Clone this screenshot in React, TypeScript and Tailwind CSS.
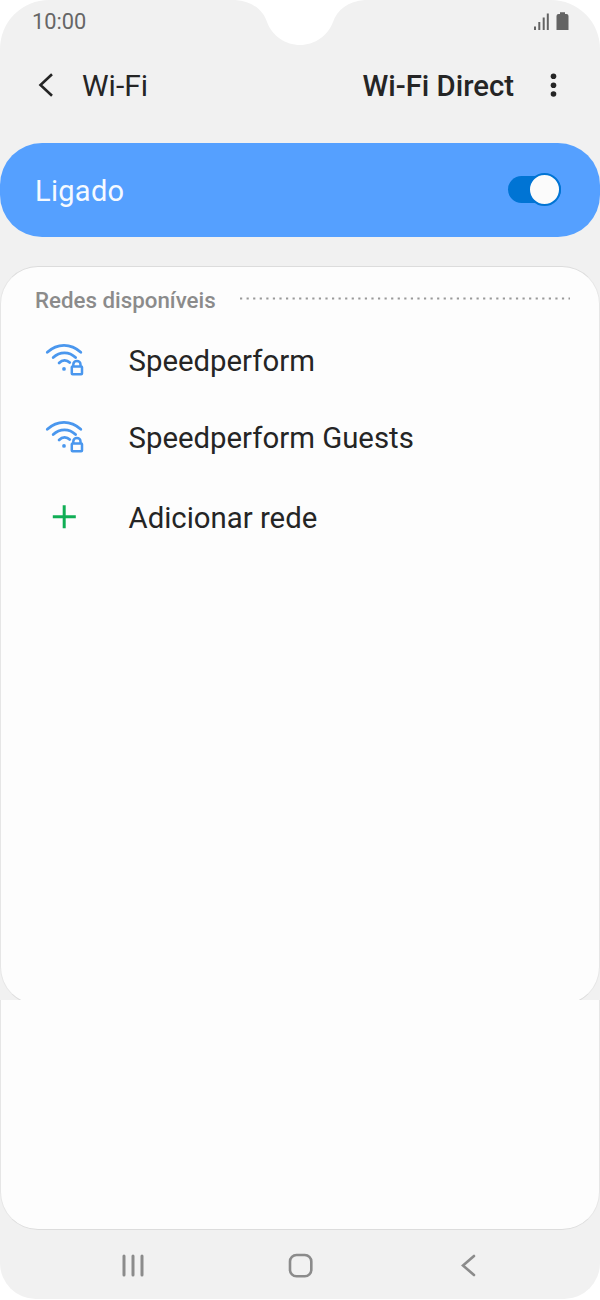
import React from 'react';

interface NetworkRowProps {
  label: string;
  className: string;
  children: React.ReactNode;
}

const WifiLockIcon = () => (
  <svg width="40" height="36" viewBox="0 -0.7 40 36" fill="none" stroke="#4a97ee" strokeWidth="2.8" strokeLinecap="round">
    <path d="M2.3 9.6C12.3 .4 25.7 .4 35.8 9.6" />
    <path d="M8.2 14.8C14.8 8.5 24.2 8.5 30.6 14.8" />
    <path d="M14.1 20.2C17.5 16.8 21.8 16.9 24.7 19.8" />
    <circle cx="19" cy="26.2" r="1.9" fill="#4a97ee" stroke="none" />
    <path d="M28.3 23v-1.2a3.6 3.6 0 0 1 7.2 0V23" strokeWidth="2.5" />
    <rect x="26.8" y="23.8" width="10.2" height="7.8" rx="0.8" strokeWidth="2.5" />
  </svg>
);

const PlusIcon = () => (
  <svg width="40" height="36" viewBox="0 0 40 36" stroke="#10ae55" strokeWidth="3">
    <path d="M7.8 17.7h23M19.2 6.2v23" />
  </svg>
);

const NetworkRow: React.FC<NetworkRowProps> = ({ label, className, children }) => (
  <li className={`flex items-center pl-[44px] ${className}`}>
    {children}
    <span className="ml-[43.5px] pt-0.5 text-[29.35px] leading-[34px] text-[#252525]">{label}</span>
  </li>
);

const StatusBar = () => (
  <div className="relative flex h-[46px] shrink-0 justify-between pl-8 pr-[31px]">
    <span className="mt-[10px] text-[21.8px] leading-6 text-[#666]">10:00</span>
    <svg className="absolute left-[232px] top-0" width="136" height="46" viewBox="0 0 136 46" fill="#fff">
      <path d="M3 0C20 1 31 10 35 22C40 36 54 45 68 45S96 36 101 22C105 10 116 1 133 0Z" />
    </svg>
    <svg className="mt-3" width="37" height="20" viewBox="0 0 37 20" fill="#636363">
      <path d="M2 14.5h2V18H2zM6.3 10h2v8h-2zM10.7 5.5h2V18h-2zM14.8 1.5h2V18h-2zM28 .3h5V2h1.5q2 0 2 2v14h-12V4q0-2 2-2H28z" />
    </svg>
  </div>
);

const TitleBar = () => (
  <header className="flex h-[97px] shrink-0 items-start text-[29.3px] leading-9 text-[#252525]">
    <svg className="ml-9 mt-[26px]" width="22" height="28" viewBox="0 0 22 28" fill="none" stroke="#252525" strokeWidth="2.6">
      <path d="M16 2.2L4.5 13L16 23.8" />
    </svg>
    <h1 className="ml-6 mt-[22px] text-[30px]">Wi-Fi</h1>
    <span className="ml-auto mt-[22px] font-medium">Wi-Fi Direct</span>
    <svg className="ml-[34px] mr-[41px] mt-[26px]" width="11" height="28" viewBox="0 0 11 28" fill="#252525">
      <circle cx="5.5" cy="4.3" r="2.8" />
      <circle cx="5.5" cy="13.2" r="2.8" />
      <circle cx="5.5" cy="22" r="2.8" />
    </svg>
  </header>
);

const NavBar = () => (
  <nav className="flex h-[69px] shrink-0 items-center justify-between pl-[120px] pr-[119px] pt-[3px]">
    <svg width="26" height="26" viewBox="0 0 26 26" stroke="#8b8b8b" strokeWidth="3" strokeLinecap="round">
      <path d="M4 3v19M13 3v19M22 3v19" />
    </svg>
    <svg width="26" height="26" viewBox="0 0 26 26" fill="none" stroke="#8b8b8b" strokeWidth="2.6">
      <rect x="2" y="2" width="21.3" height="21.3" rx="6.5" />
    </svg>
    <svg width="26" height="26" viewBox="0 0 26 26" fill="none" stroke="#8b8b8b" strokeWidth="2.6" strokeLinecap="round">
      <path d="M19 3L8 12.5L19 22" />
    </svg>
  </nav>
);

export default function App() {
  return (
    <div className="h-[1300px] w-[600px] bg-white font-['Roboto',sans-serif]">
      <main className="flex h-[1299px] flex-col overflow-hidden rounded-b-[36px] rounded-t-[49px] bg-[#f1f1f1]">
        <StatusBar />
        <TitleBar />

        <section className="flex h-[94px] shrink-0 items-center justify-between rounded-[42px] bg-[#55a0ff] pl-[35px] pr-[39px]">
          <span className="pt-px text-[29px] leading-9 tracking-[0.3px] text-[#f5faff]">Ligado</span>
          <div className="mb-px flex h-[27px] w-[53px] items-center justify-end rounded-full bg-[#0074d4]">
            <div className="size-[33px] shrink-0 rounded-full border-2 border-[#0074d4] bg-[#fbfbfb]" />
          </div>
        </section>

        <section className="mt-[29px] h-[734px] shrink-0 overflow-hidden">
          <div className="h-[739px] rounded-[38px] border border-x-[#e6e6e6] border-y-[#dcdcdc] bg-[#fdfdfd]">
            <div className="flex items-center pl-[34px] pt-[18px]">
              <h2 className="w-[181px] whitespace-nowrap text-[22.3px] font-medium leading-[30px] text-[#8b8b8b]">Redes disponíveis</h2>
              <svg className="mb-[3px] ml-6" width="330" height="3" viewBox="0 0 330 3">
                <path d="M0 1.5h330" stroke="#999" strokeWidth="2.2" strokeDasharray="2.2 4.37" />
              </svg>
            </div>
            <ul>
              <NetworkRow label="Speedperform" className="mt-[27px]"><WifiLockIcon /></NetworkRow>
              <NetworkRow label="Speedperform Guests" className="mt-[41px]"><WifiLockIcon /></NetworkRow>
              <NetworkRow label="Adicionar rede" className="mt-[44px]"><PlusIcon /></NetworkRow>
            </ul>
          </div>
        </section>

        <div className="h-[230px] shrink-0 rounded-b-[38px] border border-t-0 border-x-[#e6e6e6] border-b-[#dcdcdc] bg-[#fdfdfd]" />
        <NavBar />
      </main>
    </div>
  );
}
